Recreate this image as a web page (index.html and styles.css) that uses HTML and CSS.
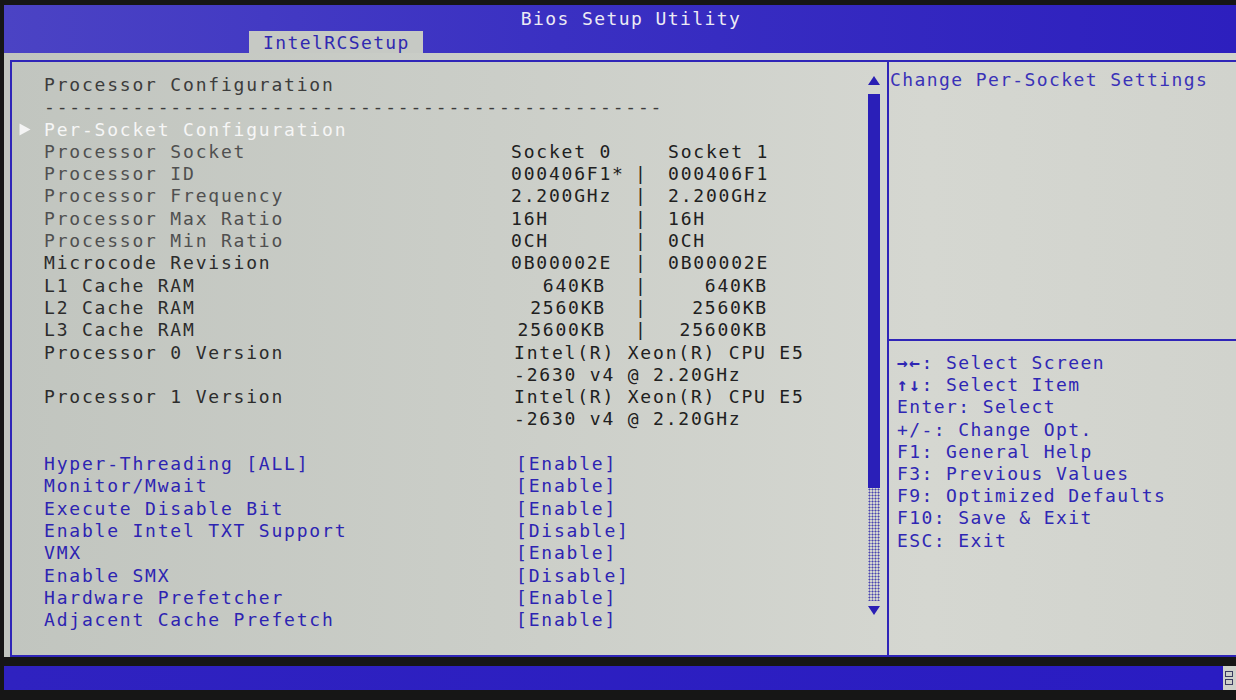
FILE: index.html
```html
<!DOCTYPE html>
<html lang="en">
<head>
  <meta charset="UTF-8">
  <meta name="viewport" content="width=device-width, initial-scale=1.0">
  <title>Bios Setup Utility</title>
  <link rel="stylesheet" href="styles.css">
</head>
<body>
  <div class="screen">

    <!-- Title bar with tab -->
    <header class="top">
      <div class="title">Bios Setup Utility</div>
      <div class="tabs"><span class="tab">IntelRCSetup</span></div>
    </header>

    <main class="body">
      <div class="frame">

        <!-- Settings list -->
        <section class="menu">
          <div class="rows">
            <div class="row head"><span class="mark"></span><span class="label">Processor Configuration</span></div>
            <div class="row head"><span class="mark"></span><span class="label">-------------------------------------------------</span></div>
            <div class="row selected">
              <span class="mark"><svg width="12" height="13" viewBox="0 0 12 13"><path d="M0.5 0.5 L11.5 6.5 L0.5 12.5 Z" fill="#f4f4f4"/></svg></span>
              <span class="label">Per-Socket Configuration</span>
            </div>
            <div class="row dim"><span class="mark"></span><span class="label">Processor Socket</span><span class="v1">Socket 0</span><span class="sep"></span><span class="v2">Socket 1</span></div>
            <div class="row dim"><span class="mark"></span><span class="label">Processor ID</span><span class="v1">000406F1*</span><span class="sep">|</span><span class="v2">000406F1</span></div>
            <div class="row dim"><span class="mark"></span><span class="label">Processor Frequency</span><span class="v1">2.200GHz</span><span class="sep">|</span><span class="v2">2.200GHz</span></div>
            <div class="row dim"><span class="mark"></span><span class="label">Processor Max Ratio</span><span class="v1">16H</span><span class="sep">|</span><span class="v2">16H</span></div>
            <div class="row dim"><span class="mark"></span><span class="label">Processor Min Ratio</span><span class="v1">0CH</span><span class="sep">|</span><span class="v2">0CH</span></div>
            <div class="row"><span class="mark"></span><span class="label">Microcode Revision</span><span class="v1">0B00002E</span><span class="sep">|</span><span class="v2">0B00002E</span></div>
            <div class="row"><span class="mark"></span><span class="label">L1 Cache RAM</span><span class="v1 num">640KB</span><span class="sep">|</span><span class="v2 num">640KB</span></div>
            <div class="row"><span class="mark"></span><span class="label">L2 Cache RAM</span><span class="v1 num">2560KB</span><span class="sep">|</span><span class="v2 num">2560KB</span></div>
            <div class="row"><span class="mark"></span><span class="label">L3 Cache RAM</span><span class="v1 num">25600KB</span><span class="sep">|</span><span class="v2 num">25600KB</span></div>
            <div class="row"><span class="mark"></span><span class="label">Processor 0 Version</span><span class="wide">Intel(R) Xeon(R) CPU E5<br>-2630 v4 @ 2.20GHz</span></div>
            <div class="row"><span class="mark"></span><span class="label">Processor 1 Version</span><span class="wide">Intel(R) Xeon(R) CPU E5<br>-2630 v4 @ 2.20GHz</span></div>
            <div class="row blank"></div>
            <div class="row opt"><span class="mark"></span><span class="label">Hyper-Threading [ALL]</span><span class="wide">[Enable]</span></div>
            <div class="row opt"><span class="mark"></span><span class="label">Monitor/Mwait</span><span class="wide">[Enable]</span></div>
            <div class="row opt"><span class="mark"></span><span class="label">Execute Disable Bit</span><span class="wide">[Enable]</span></div>
            <div class="row opt"><span class="mark"></span><span class="label">Enable Intel TXT Support</span><span class="wide">[Disable]</span></div>
            <div class="row opt"><span class="mark"></span><span class="label">VMX</span><span class="wide">[Enable]</span></div>
            <div class="row opt"><span class="mark"></span><span class="label">Enable SMX</span><span class="wide">[Disable]</span></div>
            <div class="row opt"><span class="mark"></span><span class="label">Hardware Prefetcher</span><span class="wide">[Enable]</span></div>
            <div class="row opt"><span class="mark"></span><span class="label">Adjacent Cache Prefetch</span><span class="wide">[Enable]</span></div>
          </div>

          <div class="scrollbar">
            <svg class="arrow" width="12" height="9" viewBox="0 0 12 9"><path d="M6 0 L12 9 L0 9 Z" fill="#2a1fb4"/></svg>
            <div class="thumb"></div>
            <div class="track"></div>
            <svg class="arrow" width="12" height="9" viewBox="0 0 12 9"><path d="M0 0 L12 0 L6 9 Z" fill="#2a1fb4"/></svg>
          </div>
        </section>

        <!-- Help panel -->
        <aside class="help">
          <div class="desc">Change Per-Socket Settings</div>
          <div class="keys">
            <div><b>&#8594;&#8592;</b>: Select Screen</div>
            <div><b>&#8593;&#8595;</b>: Select Item</div>
            <div>Enter: Select</div>
            <div>+/-: Change Opt.</div>
            <div>F1: General Help</div>
            <div>F3: Previous Values</div>
            <div>F9: Optimized Defaults</div>
            <div>F10: Save &amp; Exit</div>
            <div>ESC: Exit</div>
          </div>
        </aside>

      </div>
    </main>

    <footer class="bottom">
      <div class="bar"></div>
      <div class="corner"><span></span><span></span></div>
    </footer>

  </div>
</body>
</html>
```

FILE: styles.css
```css
body {
  margin: 0;
  padding-top: 5px;
  background-color: #161616;
  font-family: "DejaVu Sans Mono", "Liberation Mono", monospace;
  font-size: 18px;
  letter-spacing: 1.8px;
  color: #2c2c2c;
}

.screen {
  margin-left: 4px;
  width: 1232px;
  height: 685px;
  display: flex;
  flex-direction: column;
}

/* title bar */
.top {
  height: 48px;
  background: linear-gradient(90deg, #4b43c4 0%, #3a30c2 45%, #2d1fbe 100%);
  display: flex;
  flex-direction: column;
}

.title {
  height: 26px;
  padding-top: 5px;
  box-sizing: border-box;
  line-height: 18px;
  text-align: center;
  color: #eceaf4;
  letter-spacing: 1.4px;
  padding-left: 22px;
}

.tabs {
  display: flex;
  padding-left: 245px;
}

.tab {
  height: 22px;
  line-height: 24px;
  padding: 0 13px 0 14px;
  background-color: #c6c9c4;
  color: #3028b0;
  letter-spacing: 1.4px;
}

/* main gray area */
.body {
  height: 613px;
  box-sizing: border-box;
  padding: 7px 0 0 6px;
  background: linear-gradient(90deg, #c1c5bf 0%, #cbcec8 40%, #d5d7d1 75%, #d1d3cd 100%);
}

.frame {
  height: 597px;
  box-sizing: border-box;
  border: 2px solid #2f25b8;
  border-right: none;
  display: flex;
}

.menu {
  width: 875px;
  flex: none;
  display: flex;
}

.rows {
  flex: 1;
  padding-top: 12px;
}

.row {
  display: grid;
  grid-template-columns: 32px 467px 122px 35px 1fr;
  line-height: 22.3px;
  min-height: 22.3px;
  color: #202020;
}

.row .label {
  color: #2c2c2c;
  white-space: pre;
}

.row.head .label {
  color: #3c3c3c;
}

.row.dim .label {
  color: #505050;
}

.row.selected .label {
  color: #f6f6f6;
}

.mark {
  padding-left: 7px;
  display: flex;
  align-items: center;
}

.v1.num {
  text-align: right;
  padding-right: 27px;
}

.v2.num {
  width: 100px;
  text-align: right;
}

.sep {
  margin-left: 2px;
}

.wide {
  grid-column: 3 / -1;
  margin-left: 3px;
}

.row.opt .label,
.row.opt .wide {
  color: #2d24b2;
}

.row.opt .wide {
  margin-left: 5px;
}

/* scrollbar */
.scrollbar {
  width: 12px;
  margin: 14px 7px 0 0;
  display: flex;
  flex-direction: column;
  align-items: center;
}

.scrollbar .arrow {
  display: block;
}

.thumb {
  width: 12px;
  height: 394px;
  margin-top: 9px;
  background-color: #2a1fb8;
}

.track {
  width: 12px;
  height: 113px;
  margin-bottom: 5px;
  background-image: radial-gradient(circle, #4a44b0 0.9px, transparent 1.1px);
  background-size: 3px 3px;
}

/* help panel */
.help {
  flex: 1;
  border-left: 2px solid #2f25b8;
  color: #2f27b4;
  letter-spacing: 1.4px;
}

.desc {
  height: 279px;
  padding: 7px 0 0 1px;
  box-sizing: border-box;
  line-height: 22px;
  border-bottom: 2px solid #2f25b8;
  color: #3a32b8;
}

.keys {
  padding: 11px 0 0 8px;
  line-height: 22.2px;
}

/* bottom bar */
.bottom {
  margin-top: 9px;
  height: 24px;
  display: flex;
}

.bar {
  flex: 1;
  background: linear-gradient(90deg, #2f22c0, #2a1cc2);
}

.corner {
  width: 11px;
  background-color: #cfd1cb;
  display: flex;
  flex-direction: column;
  justify-content: center;
  gap: 2px;
  padding-left: 2px;
}

.corner span {
  width: 6px;
  height: 4px;
  border: 1px solid #3a3a60;
}
```
